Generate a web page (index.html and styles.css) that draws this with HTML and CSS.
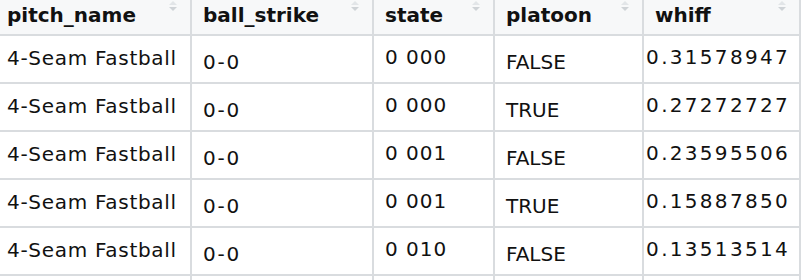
FILE: index.html
```html
<!DOCTYPE html>
<html>
<head>
<meta charset="utf-8">
<link rel="stylesheet" href="styles.css">
</head>
<body>
<table class="grid">
  <colgroup>
    <col class="c1"><col class="c2"><col class="c3"><col class="c4"><col class="c5">
  </colgroup>
  <thead>
    <tr>
      <th>pitch_name<span class="sort"></span></th>
      <th>ball_strike<span class="sort"></span></th>
      <th>state<span class="sort"></span></th>
      <th>platoon<span class="sort"></span></th>
      <th>whiff<span class="sort"></span></th>
    </tr>
  </thead>
  <tbody>
    <tr><td class="name">4-Seam Fastball</td><td class="cnt">0-0</td><td class="st">0 000</td><td class="pl">FALSE</td><td class="num">0.31578947</td></tr>
    <tr><td class="name">4-Seam Fastball</td><td class="cnt">0-0</td><td class="st">0 000</td><td class="pl">TRUE</td><td class="num">0.27272727</td></tr>
    <tr><td class="name">4-Seam Fastball</td><td class="cnt">0-0</td><td class="st">0 001</td><td class="pl">FALSE</td><td class="num">0.23595506</td></tr>
    <tr><td class="name">4-Seam Fastball</td><td class="cnt">0-0</td><td class="st">0 001</td><td class="pl">TRUE</td><td class="num">0.15887850</td></tr>
    <tr><td class="name">4-Seam Fastball</td><td class="cnt">0-0</td><td class="st">0 010</td><td class="pl">FALSE</td><td class="num">0.13513514</td></tr>
    <tr><td class="name"></td><td class="cnt"></td><td class="st"></td><td class="pl"></td><td class="num"></td></tr>
  </tbody>
</table>
</body>
</html>
```

FILE: styles.css
```css
html, body {
  margin: 0;
  padding: 0;
  background: #ffffff;
}
body {
  font-family: "DejaVu Sans", Verdana, sans-serif;
  color: #111111;
}
.grid {
  border-collapse: collapse;
  table-layout: fixed;
  width: 800px;
}
.c1 { width: 191px; }
.c2 { width: 182px; }
.c3 { width: 121px; }
.c4 { width: 149px; }
.c5 { width: 157px; }
.grid th, .grid td {
  border: 2px solid #d9dcdf;
  padding: 0 11px 0 11px;
  overflow: hidden;
  white-space: nowrap;
}
.grid tr > :first-child {
  border-left: none;
  padding-left: 7px;
}
.grid thead th {
  border-top: none;
  background: #f7f8f9;
  height: 30px;
  padding-bottom: 4px;
  text-align: left;
  font-weight: bold;
  font-size: 20px;
  position: relative;
  vertical-align: middle;
}
.sort {
  position: absolute;
  top: 1px;
  right: 13px;
  width: 8px;
  height: 12px;
}
.sort::before, .sort::after {
  content: "";
  position: absolute;
  left: 0;
  border-left: 4px solid transparent;
  border-right: 4px solid transparent;
}
.sort::before {
  top: 0;
  border-bottom: 4px solid #e2e5e8;
}
.sort::after {
  top: 6px;
  border-top: 4px solid #cfd3d7;
}
.grid tbody td {
  height: 38px;
  font-size: 20px;
  vertical-align: middle;
}
.grid tbody td.name { padding-top: 3px; padding-bottom: 5px; letter-spacing: 0.7px; }
.grid tbody td.cnt { padding-top: 7px; padding-bottom: 1px; letter-spacing: 1.8px; }
.grid tbody td.st { padding-top: 2px; padding-bottom: 6px; letter-spacing: 1px; }
.grid tbody td.pl { padding-top: 7px; padding-bottom: 1px; }
.grid tbody td.num {
  padding-top: 2px;
  padding-bottom: 6px;
  padding-left: 0;
  padding-right: 9px;
  text-align: right;
  letter-spacing: 2.3px;
}
```
